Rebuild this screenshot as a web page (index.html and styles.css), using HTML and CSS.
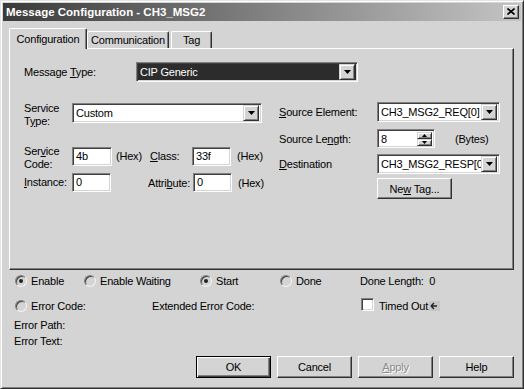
FILE: index.html
```html
<!DOCTYPE html>
<html>
<head>
<meta charset="utf-8">
<link rel="stylesheet" href="styles.css">
</head>
<body>
<div class="window">
  <div class="titlebar">
    <span class="title">Message Configuration - CH3_MSG2</span>
    <span class="closebtn"><svg width="8" height="7" viewBox="0 0 8 7"><path d="M0.5 0.5 L7.5 6.5 M7.5 0.5 L0.5 6.5" stroke="#000" stroke-width="1.6" fill="none"/></svg></span>
  </div>
  <div class="body">
    <div class="tabs">
      <div class="tab active">Configuration</div>
      <div class="tab t-comm">Communication</div>
      <div class="tab t-tag">Tag</div>
    </div>
    <div class="panel">
      <div class="row-msg">
        <span class="lbl-msg">Message <u>T</u>ype:</span>
        <div class="combo dark w-msg"><span class="val">CIP Generic</span><span class="dd"><svg width="7" height="4" viewBox="0 0 7 4"><polygon points="0,0 7,0 3.5,4" fill="#000"/></svg></span></div>
      </div>
      <div class="cols">
        <div class="lcol">
          <div class="r-stype">
            <span class="lbl2">Service<br>T<u>y</u>pe:</span>
            <div class="combo w-stype"><span class="val">Custom</span><span class="dd"><svg width="7" height="4" viewBox="0 0 7 4"><polygon points="0,0 7,0 3.5,4" fill="#000"/></svg></span></div>
          </div>
          <div class="r-scode">
            <span class="lbl2">Ser<u>v</u>ice<br>Code:</span>
            <span class="field w40">4b</span>
            <span class="hex">(Hex)</span>
            <span class="lbl3"><u>C</u>lass:</span>
            <span class="field w39">33f</span>
            <span class="hex2">(Hex)</span>
          </div>
          <div class="r-inst">
            <span class="lbl2"><u>I</u>nstance:</span>
            <span class="field w39b">0</span>
            <span class="hex">&nbsp;</span>
            <span class="lbl3 attr">Attri<u>b</u>ute:</span>
            <span class="field w39">0</span>
            <span class="hex2">(Hex)</span>
          </div>
        </div>
        <div class="rcol">
          <div class="r-right">
            <span class="lblr"><u>S</u>ource Element:</span>
            <div class="combo w-src"><span class="val">CH3_MSG2_REQ[0]</span><span class="dd"><svg width="7" height="4" viewBox="0 0 7 4"><polygon points="0,0 7,0 3.5,4" fill="#000"/></svg></span></div>
          </div>
          <div class="r-right r-len">
            <span class="lblr">Source Le<u>n</u>gth:</span>
            <div class="spin">
              <span class="val">8</span>
              <span class="spinbtns">
                <span class="sb"><svg width="5" height="3" viewBox="0 0 5 3"><polygon points="2.5,0 5,3 0,3" fill="#000"/></svg></span>
                <span class="sb"><svg width="5" height="3" viewBox="0 0 5 3"><polygon points="0,0 5,0 2.5,3" fill="#000"/></svg></span>
              </span>
            </div>
            <span class="bytes">(Bytes)</span>
          </div>
          <div class="r-right r-dest">
            <span class="lblr"><u>D</u>estination</span>
            <div class="combo w-src"><span class="val clip">CH3_MSG2_RESP[0]</span><span class="dd"><svg width="7" height="4" viewBox="0 0 7 4"><polygon points="0,0 7,0 3.5,4" fill="#000"/></svg></span></div>
          </div>
          <div class="r-newtag">
            <span class="btn"><span>Ne<u>w</u> Tag...</span></span>
          </div>
        </div>
      </div>
    </div>
    <div class="status">
      <div class="srow s1">
        <span class="cell c-en"><span class="radio on"></span>Enable</span>
        <span class="cell c-ew"><span class="radio"></span>Enable Waiting</span>
        <span class="cell c-st"><span class="radio on"></span>Start</span>
        <span class="cell c-dn"><span class="radio"></span>Done</span>
        <span class="cell">Done Length:&nbsp; 0</span>
      </div>
      <div class="srow s2">
        <span class="cell c-ec"><span class="radio"></span>Error Code:</span>
        <span class="cell c-eec">Extended Error Code:</span>
        <span class="cell"><span class="check"></span>Timed Out<svg class="arrow" width="11" height="10" viewBox="0 0 11 10"><rect width="11" height="10" fill="#c6c6c6"/><path d="M2 5 L8 5 M2 5 L5 2 M2 5 L5 8" stroke="#222" stroke-width="1.4" fill="none"/></svg></span>
      </div>
      <div class="srow s3">Error Path:</div>
      <div class="srow s4">Error Text:</div>
      <div class="buttons">
        <span class="btn dbtn def">OK</span>
        <span class="btn dbtn">Cancel</span>
        <span class="btn dbtn disabled"><span><u>A</u>pply</span></span>
        <span class="btn dbtn">Help</span>
      </div>
    </div>
  </div>
</div>
</body>
</html>
```

FILE: styles.css
```css
html, body {
  margin: 0;
  padding: 0;
  background: #d4d4d4;
}
body {
  font-family: "Liberation Sans", Arial, sans-serif;
  font-size: 11px;
  letter-spacing: -0.2px;
  color: #000;
}
u { text-decoration: underline; text-underline-offset: 1px; }

.window {
  width: 524px;
  height: 389px;
  box-sizing: border-box;
  border: 1px solid;
  border-color: #e4e4e4 #303030 #303030 #e4e4e4;
  box-shadow: inset 1px 1px #ffffff, inset -1px -1px #808080;
  padding: 2px;
  background: #d4d4d4;
  display: flex;
  flex-direction: column;
}

.titlebar {
  height: 18px;
  background: linear-gradient(to right, #3a3a3a 0%, #7a7a7a 45%, #c4c4c4 100%);
  display: flex;
  align-items: center;
  justify-content: space-between;
  padding: 0 2px 0 3px;
}
.title {
  color: #fff;
  font-weight: bold;
  font-size: 11.5px;
  letter-spacing: 0;
  line-height: 18px;
}
.closebtn {
  width: 16px;
  height: 14px;
  box-sizing: border-box;
  background: #d4d4d4;
  border: 1px solid;
  border-color: #fff #303030 #303030 #fff;
  box-shadow: inset -1px -1px #808080;
  display: flex;
  align-items: center;
  justify-content: center;
  padding-bottom: 1px;
}

.body {
  flex: 1;
  display: flex;
  flex-direction: column;
  padding: 7px 7px 0 6px;
}

.tabs {
  display: flex;
  align-items: flex-end;
  height: 20px;
  position: relative;
  z-index: 1;
}
.tab {
  box-sizing: border-box;
  height: 17px;
  border: 1px solid;
  border-bottom: none;
  border-color: #fff #303030 #fff #fff;
  box-shadow: inset -1px 0 #808080;
  border-radius: 2px 2px 0 0;
  text-align: center;
  line-height: 16px;
  background: #d4d4d4;
}
.tab.active {
  width: 78px;
  height: 21px;
  margin-bottom: -1px;
  line-height: 20px;
  padding-bottom: 2px;
}
.t-comm { width: 82px; }
.t-tag { width: 41px; margin-left: 2px; }

.panel {
  box-sizing: border-box;
  height: 222px;
  border: 1px solid;
  border-color: #fff #303030 #303030 #fff;
  box-shadow: inset -1px -1px #808080;
  padding: 13px 0 0 14px;
}

.row-msg {
  display: flex;
  align-items: center;
  height: 20px;
}
.lbl-msg { width: 112px; }

.combo {
  box-sizing: border-box;
  height: 20px;
  display: flex;
  align-items: center;
  border: 1px solid;
  border-color: #808080 #fff #fff #808080;
  box-shadow: inset 1px 1px #404040, inset -1px -1px #d4d4d4;
  background: #fff;
  padding: 2px 2px 2px 2px;
}
.combo .val {
  flex: 1;
  padding-left: 1px;
  line-height: 16px;
  white-space: nowrap;
  overflow: hidden;
}
.combo .val.clip { text-overflow: clip; }
.combo.dark { background: #2c2c2c; }
.combo.dark .val { color: #fff; }
.dd {
  width: 16px;
  height: 16px;
  flex: none;
  box-sizing: border-box;
  background: #d4d4d4;
  border: 1px solid;
  border-color: #d4d4d4 #303030 #303030 #d4d4d4;
  box-shadow: inset 1px 1px #fff, inset -1px -1px #808080;
  display: flex;
  align-items: center;
  justify-content: center;
}
.w-msg { width: 222px; }
.w-stype { width: 190px; }
.w-src { width: 123px; }

.cols {
  display: flex;
  margin-top: 20px;
}
.lcol { width: 238px; }
.rcol { margin-left: 17px; }

.r-stype {
  display: flex;
  align-items: flex-start;
}
.lbl2 {
  width: 48px;
  line-height: 13px;
  flex: none;
}
.r-stype .combo { margin-top: 1px; height: 20px; }

.r-scode {
  display: flex;
  align-items: flex-start;
  margin-top: 17px;
}
.r-scode .field { margin-top: 2px; }
.r-scode .hex, .r-scode .lbl3, .r-scode .hex2 { margin-top: 5px; }

.r-inst {
  display: flex;
  align-items: center;
  margin-top: 2px;
}
.field {
  box-sizing: border-box;
  height: 19px;
  border: 1px solid;
  border-color: #808080 #fff #fff #808080;
  box-shadow: inset 1px 1px #404040, inset -1px -1px #d4d4d4;
  background: #fff;
  padding: 0 3px;
  line-height: 17px;
  flex: none;
}
.w40 { width: 40px; }
.w39 { width: 39px; }
.w39b { width: 39px; }
.hex { width: 36px; padding-left: 4px; box-sizing: border-box; flex: none; }
.r-inst .hex { width: 37px; }
.lbl3 { width: 44px; padding-left: 2px; box-sizing: border-box; flex: none; }
.lbl3.attr { padding-left: 0; width: 45px; }
.hex2 { padding-left: 6px; }

.r-right {
  display: flex;
  align-items: center;
  height: 20px;
}
.lblr { width: 98px; flex: none; }
.r-len { margin-top: 7px; height: 19px; }
.r-dest { margin-top: 6px; }
.spin {
  box-sizing: border-box;
  width: 58px;
  height: 19px;
  display: flex;
  border: 1px solid;
  border-color: #808080 #fff #fff #808080;
  box-shadow: inset 1px 1px #404040, inset -1px -1px #d4d4d4;
  background: #fff;
  padding: 2px 2px 1px 2px;
}
.spin .val { flex: 1; line-height: 15px; padding-left: 1px; }
.spinbtns {
  display: flex;
  flex-direction: column;
  width: 15px;
}
.sb {
  flex: 1;
  box-sizing: border-box;
  background: #d4d4d4;
  border: 1px solid;
  border-color: #d4d4d4 #303030 #303030 #d4d4d4;
  box-shadow: inset 1px 1px #fff, inset -1px -1px #808080;
  display: flex;
  align-items: center;
  justify-content: center;
}
.sb svg { display: block; }
.bytes { margin-left: 20px; }

.r-newtag {
  margin-top: 4px;
  padding-left: 98px;
  display: flex;
}
.btn {
  box-sizing: border-box;
  width: 75px;
  height: 21px;
  display: flex;
  align-items: center;
  justify-content: center;
  background: #d4d4d4;
  border: 1px solid;
  border-color: #fff #303030 #303030 #fff;
  box-shadow: inset -1px -1px #808080;
  white-space: nowrap;
}

.status {
  padding-left: 6px;
  display: flex;
  flex-direction: column;
}
.srow {
  display: flex;
  align-items: center;
  height: 14px;
}
.s1 { margin-top: 4px; }
.s2 { margin-top: 11px; }
.s3 { margin-top: 5px; padding-left: 0; margin-left: -1px; }
.s4 { margin-top: 2px; margin-left: -1px; }
.cell {
  display: flex;
  align-items: center;
  flex: none;
  white-space: nowrap;
}
.c-en { width: 69px; }
.c-ew { width: 116px; }
.c-st { width: 80px; }
.c-dn { width: 80px; }
.c-ec { width: 137px; }
.c-eec { width: 209px; }

.radio {
  box-sizing: border-box;
  width: 12px;
  height: 12px;
  border-radius: 50%;
  border: 1px solid;
  border-color: #808080 #f4f4f4 #f4f4f4 #808080;
  box-shadow: inset 1px 1px #404040;
  background: #d4d4d4;
  margin-right: 4px;
  position: relative;
}
.radio.on::after {
  content: "";
  position: absolute;
  left: 3px;
  top: 3px;
  width: 4px;
  height: 4px;
  border-radius: 50%;
  background: #202020;
}
.check {
  box-sizing: border-box;
  width: 13px;
  height: 13px;
  border: 1px solid;
  border-color: #808080 #fff #fff #808080;
  box-shadow: inset 1px 1px #404040, inset -1px -1px #d4d4d4;
  background: #fff;
  margin-right: 5px;
  margin-top: -4px;
}
.arrow { margin-left: 1px; display: block; }

.buttons {
  display: flex;
  justify-content: flex-end;
  gap: 6px;
  margin-top: 8px;
}
.dbtn { height: 22px; }
.dbtn.def {
  border-color: #000;
  box-shadow: inset 1px 1px #fff, inset -1px -1px #404040, inset -2px -2px #808080;
}
.dbtn.disabled {
  color: #8a8a8a;
  text-shadow: 1px 1px #fff;
}
```
